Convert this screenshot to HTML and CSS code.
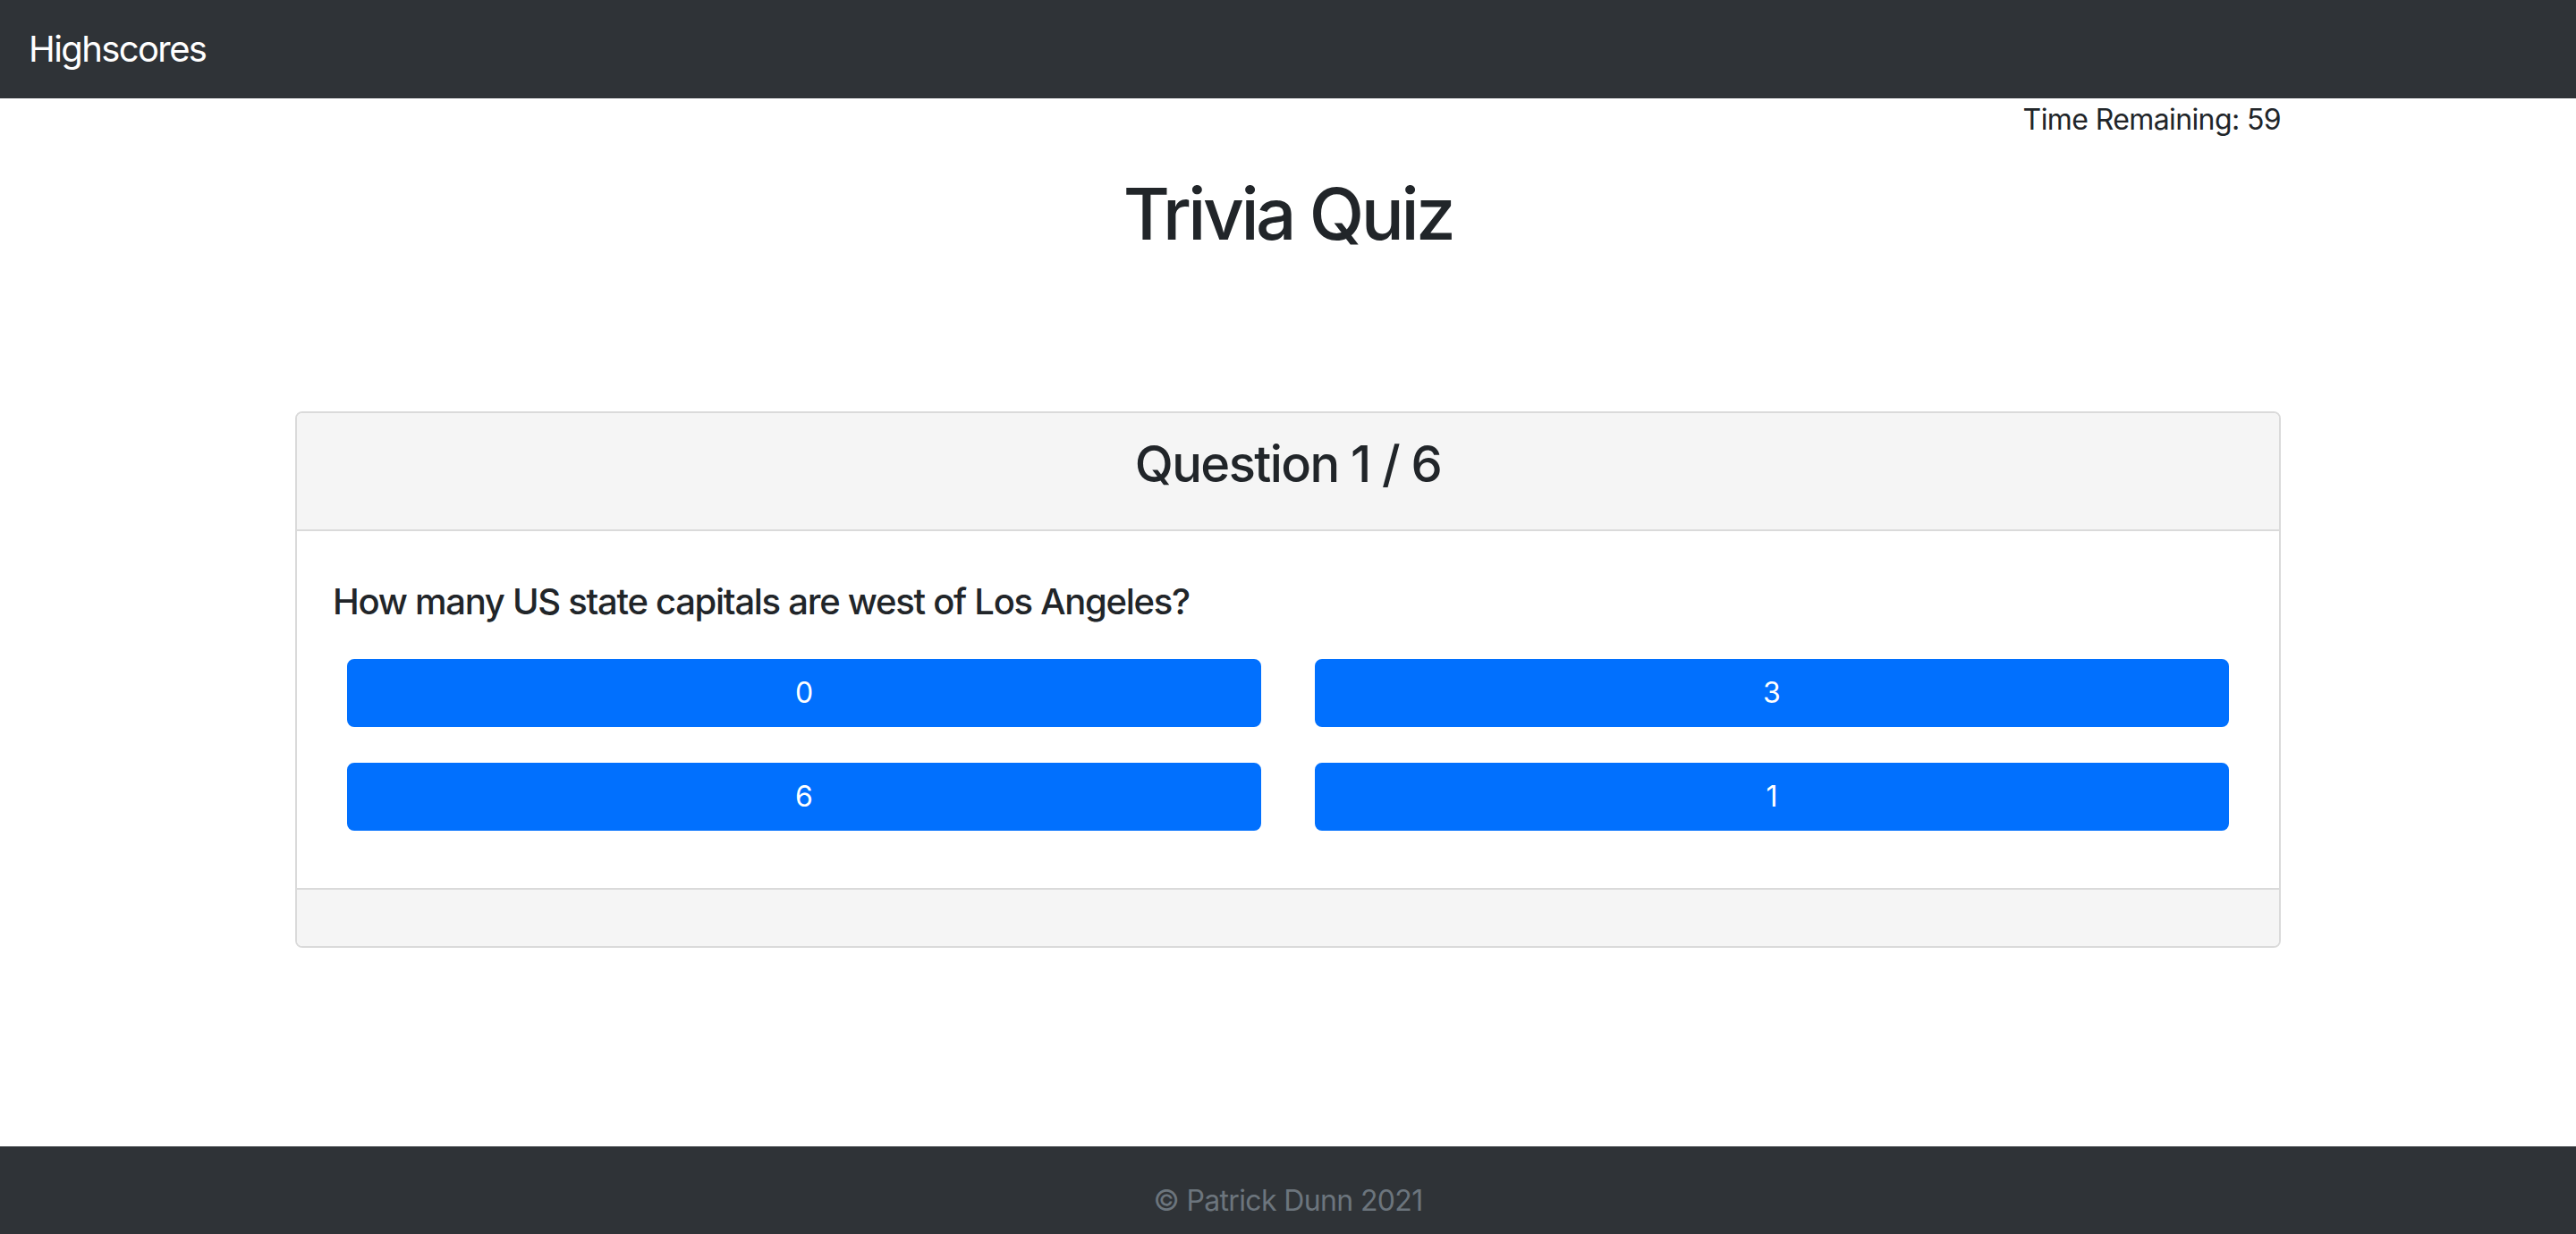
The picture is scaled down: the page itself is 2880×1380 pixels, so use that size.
FILE: index.html
```html
<!DOCTYPE html>
<html lang="en">
<head>
<meta charset="utf-8">
<title>Trivia Quiz</title>
<link rel="stylesheet" href="styles.css">
</head>
<body>
  <nav class="navbar">
    <a class="brand" href="#">Highscores</a>
  </nav>
  <main class="container">
    <div class="timer">Time Remaining: 59</div>
    <h1 class="title">Trivia Quiz</h1>
    <section class="card">
      <header class="card-header">
        <h3 class="card-title">Question 1 / 6</h3>
      </header>
      <div class="card-body">
        <h5 class="question">How many US state capitals are west of Los Angeles?</h5>
        <div class="answers">
          <button class="btn">0</button>
          <button class="btn">3</button>
          <button class="btn">6</button>
          <button class="btn">1</button>
        </div>
      </div>
      <div class="card-footer"></div>
    </section>
  </main>
  <footer class="footer">
    <p class="copy">© Patrick Dunn 2021</p>
  </footer>
</body>
</html>
```

FILE: styles.css
```css
* { box-sizing: border-box; }

html, body { margin: 0; padding: 0; }

body {
  font-family: Inter, "Noto Sans", "Liberation Sans", sans-serif;
  color: #212529;
  background: #ffffff;
  min-height: 1380px;
  height: 1380px;
  display: flex;
  flex-direction: column;
  overflow: hidden;
}

.navbar {
  background: #2f3337;
  height: 110px;
  padding: 0 32px;
  display: flex;
  align-items: center;
  flex-shrink: 0;
}

.brand {
  color: #ffffff;
  text-decoration: none;
  font-size: 40px;
  line-height: 60px;
  font-weight: 400;
  letter-spacing: -0.04em;
}

.container {
  width: 2220px;
  margin: 0 auto;
}

.timer {
  text-align: right;
  font-size: 32px;
  line-height: 48px;
  letter-spacing: -0.019em;
}

.title {
  margin: 33px 0 0;
  text-align: center;
  font-size: 80px;
  line-height: 96px;
  font-weight: 500;
  letter-spacing: -0.044em;
}

.card {
  margin-top: 173px;
  border: 2px solid #dadada;
  border-radius: 8px;
  overflow: hidden;
}

.card-header {
  background: #f5f5f5;
  border-bottom: 2px solid #dadada;
  padding: 24px 40px;
}

.card-title {
  margin: 0 0 16px;
  text-align: center;
  font-size: 56px;
  line-height: 66px;
  font-weight: 500;
  letter-spacing: -0.028em;
}

.card-body {
  padding: 40px;
}

.question {
  margin: 15px 0 40px;
  font-size: 40px;
  line-height: 48px;
  font-weight: 500;
  letter-spacing: -0.032em;
}

.answers {
  display: grid;
  grid-template-columns: 1fr 1fr;
  column-gap: 60px;
  row-gap: 40px;
  padding: 0 16px;
  margin-bottom: 24px;
}

.btn {
  height: 76px;
  border: 2px solid #0170fe;
  background: #0170fe;
  color: #ffffff;
  border-radius: 8px;
  font-family: Inter, "Noto Sans", "Liberation Sans", sans-serif;
  font-size: 32px;
  line-height: 48px;
  padding: 12px 24px;
  cursor: pointer;
}

.card-footer {
  background: #f5f5f5;
  border-top: 2px solid #dadada;
  height: 65px;
}

.footer {
  margin-top: auto;
  background: #2f3337;
  height: 98px;
  text-align: center;
  flex-shrink: 0;
}

.copy {
  margin: 0;
  padding-top: 37px;
  color: #6c757d;
  font-size: 32px;
  line-height: 48px;
  letter-spacing: -0.02em;
}
```
